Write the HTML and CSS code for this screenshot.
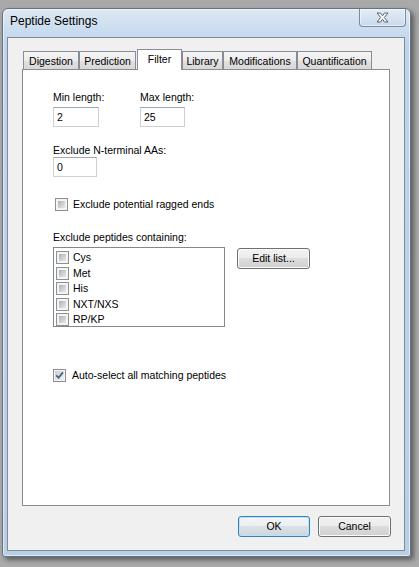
FILE: index.html
```html
<!DOCTYPE html>
<html>
<head>
<meta charset="utf-8">
<title>Peptide Settings</title>
<link rel="stylesheet" href="styles.css">
</head>
<body>
<div class="window">
  <div class="titlebar">
    <span class="title">Peptide Settings</span>
    <div class="close">
      <svg width="13" height="11" viewBox="0 0 13 11"><polygon points="1,1 4.5,1 6.5,3.8 8.5,1 12,1 8.3,5.5 12,10 8.5,10 6.5,7.2 4.5,10 1,10 4.7,5.5" fill="#ffffff" stroke="#56606e" stroke-width="1" stroke-linejoin="round"/></svg>
    </div>
  </div>
  <div class="client">
    <div class="tabstrip">
      <div class="tab t-dig">Digestion</div>
      <div class="tab t-pred">Prediction</div>
      <div class="tab tab-sel">Filter</div>
      <div class="tab t-lib">Library</div>
      <div class="tab t-mod">Modifications</div>
      <div class="tab t-quant">Quantification</div>
    </div>
    <div class="panel">
      <div class="len-row">
        <div class="field f-min">
          <span class="lbl">Min length:</span>
          <input class="txt w-min" type="text" value="2">
        </div>
        <div class="field">
          <span class="lbl">Max length:</span>
          <input class="txt w-max" type="text" value="25">
        </div>
      </div>
      <div class="field f-nterm">
        <span class="lbl">Exclude N-terminal AAs:</span>
        <input class="txt w-nt" type="text" value="0">
      </div>
      <div class="check c-ragged"><span class="cb"></span><span class="ctext">Exclude potential ragged ends</span></div>
      <div class="lbl l-excl">Exclude peptides containing:</div>
      <div class="list-row">
        <div class="listbox">
          <div class="item"><span class="cb"></span>Cys</div>
          <div class="item"><span class="cb"></span>Met</div>
          <div class="item"><span class="cb"></span>His</div>
          <div class="item"><span class="cb"></span>NXT/NXS</div>
          <div class="item"><span class="cb"></span>RP/KP</div>
        </div>
        <button class="btn b-edit">Edit list...</button>
      </div>
      <div class="check c-auto"><span class="cb checked"><svg width="9" height="9" viewBox="0 0 9 9"><path d="M1.2 4.3 L3.6 6.8 L7.9 1.4" fill="none" stroke="#4a5d85" stroke-width="1.7"/></svg></span><span class="ctext">Auto-select all matching peptides</span></div>
    </div>
    <div class="buttons">
      <button class="btn btn-default b-ok">OK</button>
      <button class="btn b-cancel">Cancel</button>
    </div>
  </div>
</div>
</body>
</html>
```
FILE: styles.css
```css
* { box-sizing: border-box; }
html, body { margin: 0; height: 100%; }
body {
  background: #a9a9a9;
  padding: 8px 0 0 2px;
  font-family: "Liberation Sans", Arial, sans-serif;
  font-size: 10.5px;
  line-height: 13px;
  color: #000;
  overflow: hidden;
}
.window {
  width: 409px;
  height: 549px;
  border: 1px solid #66727f;
  border-radius: 6px 6px 3px 3px;
  background: linear-gradient(to bottom, #dde8f3 0px, #cddef0 18px, #bfd4ea 36px, #b9cfe6 100%);
  box-shadow: 3px 3px 5px rgba(0,0,0,0.45), inset 0 0 0 1px rgba(255,255,255,0.55);
  display: flex;
  flex-direction: column;
}
.titlebar {
  height: 28px;
  display: flex;
  align-items: flex-start;
  padding-left: 7px;
}
.title {
  font-family: "Liberation Sans", Arial, sans-serif;
  font-size: 12px;
  line-height: 15px;
  margin-top: 5px;
  color: #000;
}
.close {
  margin-left: auto;
  margin-right: 4px;
  width: 47px;
  height: 18px;
  border: 1px solid #7c8a9c;
  border-top: 0;
  border-radius: 0 0 4px 4px;
  background: linear-gradient(to bottom, #e4edf7, #c9d9eb);
  box-shadow: inset 0 0 0 1px rgba(255,255,255,0.5);
  display: flex;
  align-items: center;
  justify-content: center;
}
.client {
  margin: 0 5px 0 4px;
  height: 514px;
  border: 1px solid #808b98;
  background: #f0f0f0;
  padding: 11px 14px 0 14px;
  display: flex;
  flex-direction: column;
}
.tabstrip {
  display: flex;
  align-items: flex-end;
  height: 20px;
}
.tab {
  height: 18px;
  border: 1px solid #898c95;
  border-bottom: 0;
  padding-top: 3px;
  text-align: center;
  white-space: nowrap;
  background: linear-gradient(to bottom, #f4f4f4 0%, #ececec 50%, #e1e1e1 51%, #d8d8d8 100%);
}
.t-dig { margin-left: 1px; width: 56px; }
.t-pred { width: 57px; }
.tab-sel {
  position: relative;
  z-index: 1;
  margin-left: 1px;
  width: 45px;
  height: 21px;
  margin-bottom: -1px;
  background: #fff;
}
.t-lib { width: 41px; }
.t-mod { width: 74px; }
.t-quant { width: 75px; }
.panel {
  height: 437px;
  border: 1px solid #898c95;
  background: #fff;
  padding-left: 30px;
  display: flex;
  flex-direction: column;
  align-items: flex-start;
}
.len-row { display: flex; margin-top: 21px; }
.field { display: flex; flex-direction: column; align-items: flex-start; }
.f-min { width: 87px; }
.lbl { height: 13px; white-space: nowrap; }
.txt {
  margin: 3px 0 0 0;
  height: 20px;
  border: 1px solid #ccd0d6;
  border-top-color: #a3a6ac;
  background: #fff;
  padding: 0 0 0 3px;
  font: inherit;
  line-height: 13px;
  color: #000;
  outline: none;
}
.w-min { width: 46px; }
.w-max { width: 45px; }
.w-nt { width: 44px; }
.f-nterm { margin-top: 17px; }
.f-nterm .txt { margin-top: 0; }
.check { display: flex; align-items: center; height: 13px; }
.c-ragged { margin-top: 21px; padding-left: 2px; }
.c-ragged .ctext { margin-left: 5px; }
.l-excl { margin-top: 20px; }
.list-row { display: flex; align-items: flex-start; margin-top: 3px; }
.listbox {
  width: 172px;
  height: 80px;
  border: 1px solid #828790;
  background: #fff;
  padding: 2px 0 0 2px;
}
.item {
  height: 15.5px;
  display: flex;
  align-items: center;
  gap: 4px;
}
.cb {
  width: 13px;
  height: 13px;
  flex: none;
  border: 1px solid #8e8f8f;
  padding: 2px;
  background: linear-gradient(135deg, #adb2b8 0%, #e8e8e9 100%) content-box, #f4f4f4;
  display: flex;
  align-items: center;
  justify-content: center;
}
.cb.checked {
  padding: 1px;
  background: linear-gradient(135deg, #c9cdd2 0%, #f2f2f3 100%) content-box, #f4f4f4;
}
.c-auto { margin-top: 42px; }
.c-auto .ctext { margin-left: 6px; }
.btn {
  height: 21px;
  padding: 0;
  font: inherit;
  line-height: 13px;
  color: #000;
  border: 1px solid #707070;
  border-radius: 3px;
  background: linear-gradient(to bottom, #f2f2f2 0%, #ebebeb 49%, #dddddd 50%, #cfcfcf 100%);
  box-shadow: inset 0 0 0 1px #fbfbfb;
}
.b-edit { margin: 1px 0 0 12px; width: 73px; }
.buttons {
  display: flex;
  justify-content: flex-end;
  gap: 8px;
  margin-top: 10px;
  margin-right: -1px;
}
.b-ok { width: 72px; }
.b-cancel { width: 73px; }
.btn-default {
  border-color: #3c7fb1;
  box-shadow: inset 0 0 0 1px #b9e4fa;
  background: linear-gradient(to bottom, #f3f6f8 0%, #eaeef1 49%, #dbe1e6 50%, #ced6dd 100%);
}
```
